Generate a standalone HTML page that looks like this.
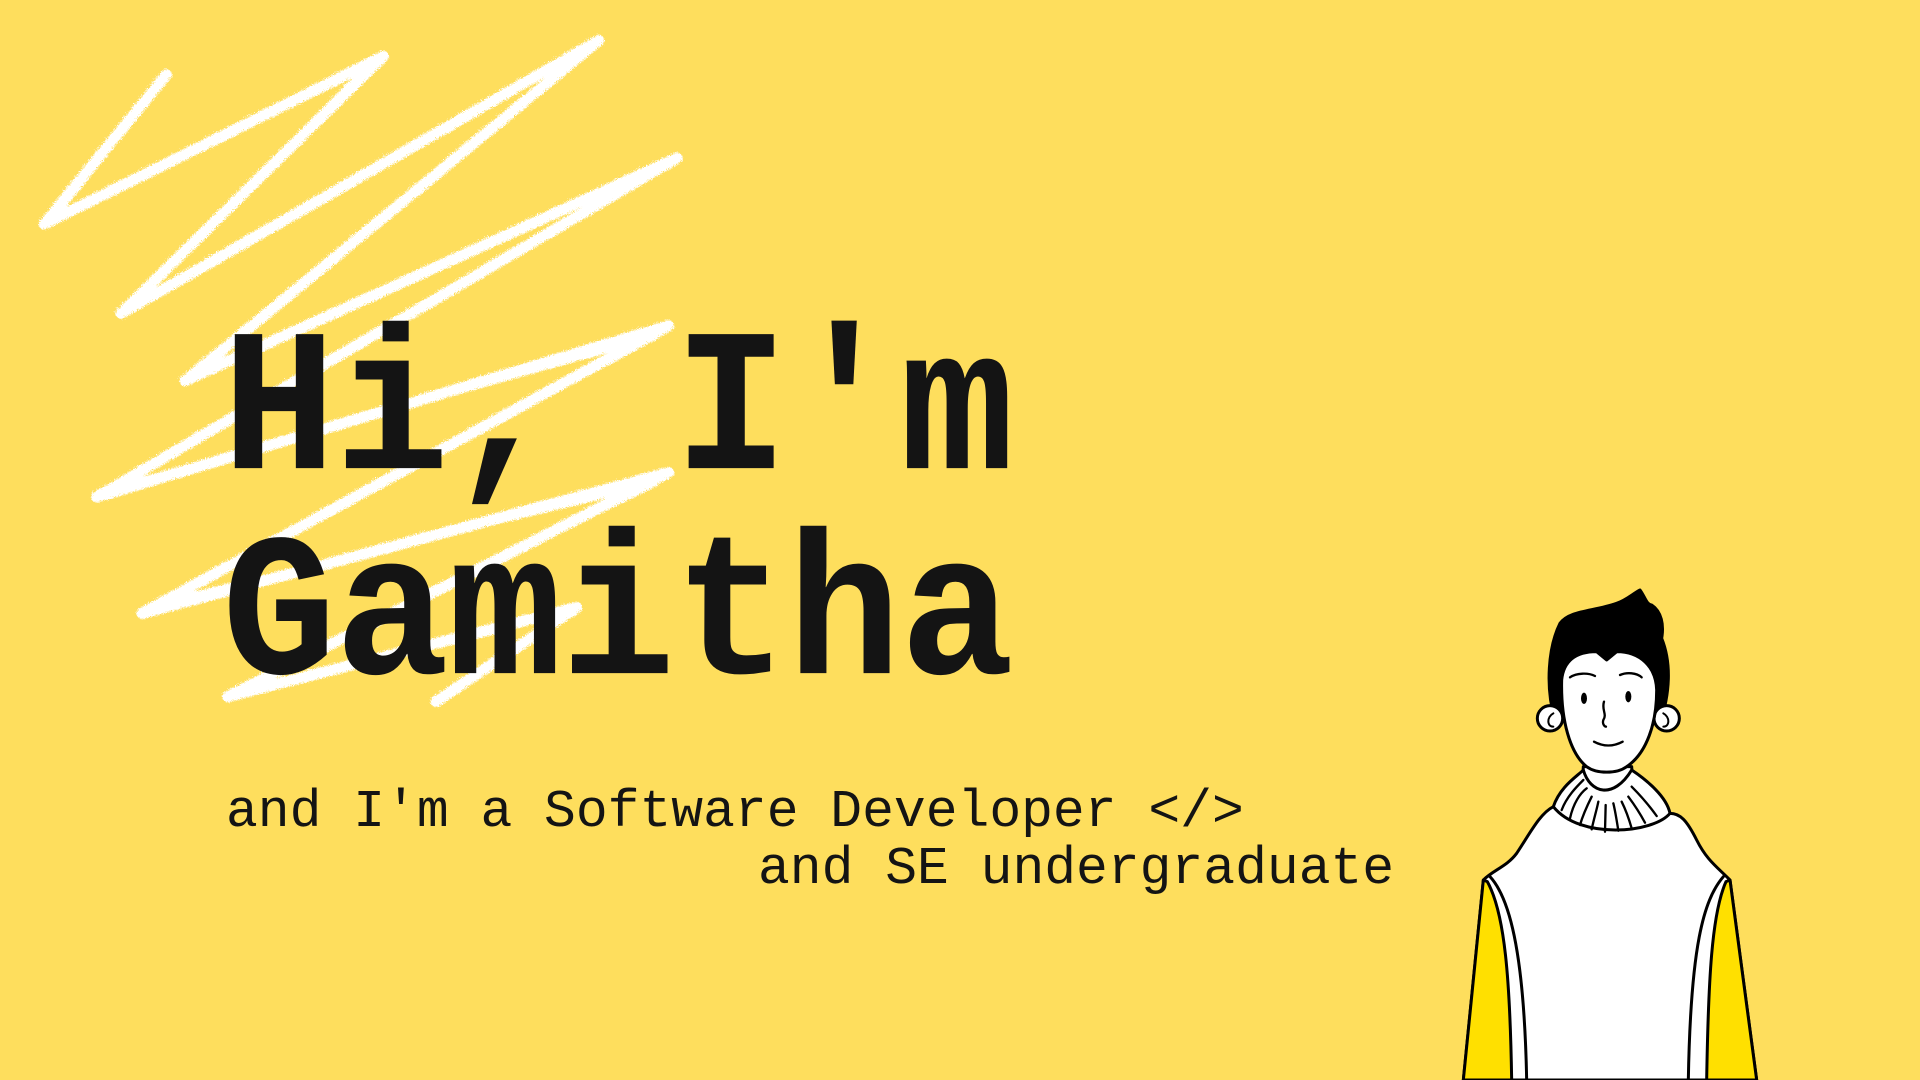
<!DOCTYPE html>
<html><head><meta charset="utf-8"><style>
html,body{margin:0;padding:0;}
body{width:1920px;height:1080px;background:#FEDE5D;position:relative;overflow:hidden;font-family:"Liberation Mono",monospace;color:#141414;}
.scr{position:absolute;left:0;top:0;}
.h{position:absolute;left:222px;font-weight:bold;font-size:190px;line-height:1;letter-spacing:-1px;white-space:pre;transform:scaleY(1.07);transform-origin:0 0;}
.s{position:absolute;font-size:53px;line-height:1;white-space:pre;}
.fig{position:absolute;left:1440px;top:580px;}
</style></head><body>
<svg class="scr" width="1920" height="1080" viewBox="0 0 1568 882">
<defs><filter id="r"><feTurbulence baseFrequency="0.9" numOctaves="2" seed="3"/><feDisplacementMap in="SourceGraphic" scale="4"/></filter></defs>
<g filter="url(#r)" fill="none" stroke="#fff" stroke-width="9" stroke-linecap="round" stroke-linejoin="round">
<polyline points="135,60 35,182 312,45 98,255 488,32 150,310 552,128 78,405 545,265 115,500 545,385 185,568 470,495 355,572"/>
<polyline points="130,68 44,176 300,52 106,248 478,40 160,302 540,136 88,398 535,274 125,492 535,394 195,560" stroke-width="4"/>
</g>
</svg>
<div class="h" style="top:314px">Hi, I'm</div>
<div class="h" style="top:519px">Gamitha</div>
<div class="s" style="left:226px;top:786px">and I'm a Software Developer &lt;/&gt;</div>
<div class="s" style="left:758px;top:843px">and SE undergraduate</div>
<svg class="fig" width="340" height="500" viewBox="0 0 1020 1500">
<g stroke="#000" stroke-width="9" stroke-linejoin="round" stroke-linecap="round">
<path d="M340,680 C300,700 270,760 230,820 C200,860 160,870 130,900 L70,1500 L950,1500 L870,900 C830,860 800,840 770,780 C740,720 720,700 690,700 Z" fill="#fff"/>
<path d="M130,900 L70,1500 L215,1500 C210,1200 195,1000 142,905 Z" fill="#FFE000"/>
<path d="M870,900 L950,1500 L800,1500 C805,1200 815,1000 858,905 Z" fill="#FFE000"/>
<path d="M150,890 C205,950 252,1100 260,1500 M850,890 C790,960 752,1100 745,1500" fill="none"/>
<path d="M430,560 L425,630 L580,630 L575,560 Z" fill="#fff"/>
<path d="M340,680 C360,620 410,590 430,570 C450,640 520,660 575,570 C620,600 680,650 690,700 C640,760 420,780 340,680 Z" fill="#fff"/>
<path d="M365,690 C380,650 410,620 430,600 M390,715 C400,670 420,640 440,625 M420,735 C430,700 445,670 455,650 M455,748 C462,715 470,690 475,665 M495,755 L497,675 M535,752 C530,720 525,690 520,670 M575,745 C565,710 555,685 545,665 M615,728 C600,700 580,670 565,650 M650,708 C630,680 600,645 575,620" fill="none" stroke-width="7"/>
<path d="M345,420 C315,320 325,200 360,130 C390,90 460,95 530,70 C560,60 580,40 600,30 C615,50 620,75 635,75 C665,95 672,135 665,175 C695,250 690,340 660,430 Z" fill="#000"/>
<circle cx="330" cy="415" r="38" fill="#fff"/>
<circle cx="680" cy="415" r="38" fill="#fff"/>
<path d="M340,400 C320,410 320,440 340,440 M670,400 C690,410 690,440 670,440" fill="none" stroke-width="6"/>
<path d="M365,300 C370,250 400,215 470,215 L500,240 L530,215 C600,215 648,260 650,330 C650,430 620,520 560,560 C530,582 470,582 440,560 C390,520 362,420 365,300 Z" fill="#fff"/>
<ellipse cx="432" cy="355" rx="9" ry="17" fill="#000" stroke="none"/>
<ellipse cx="565" cy="350" rx="9" ry="17" fill="#000" stroke="none"/>
<path d="M390,292 C410,278 445,278 465,288 M540,285 C560,276 590,278 605,292 M492,365 C484,390 502,402 490,420 C486,432 494,440 498,440 M462,485 Q505,508 548,485" fill="none" stroke-width="7"/>
</g>
</svg>
</body></html>
